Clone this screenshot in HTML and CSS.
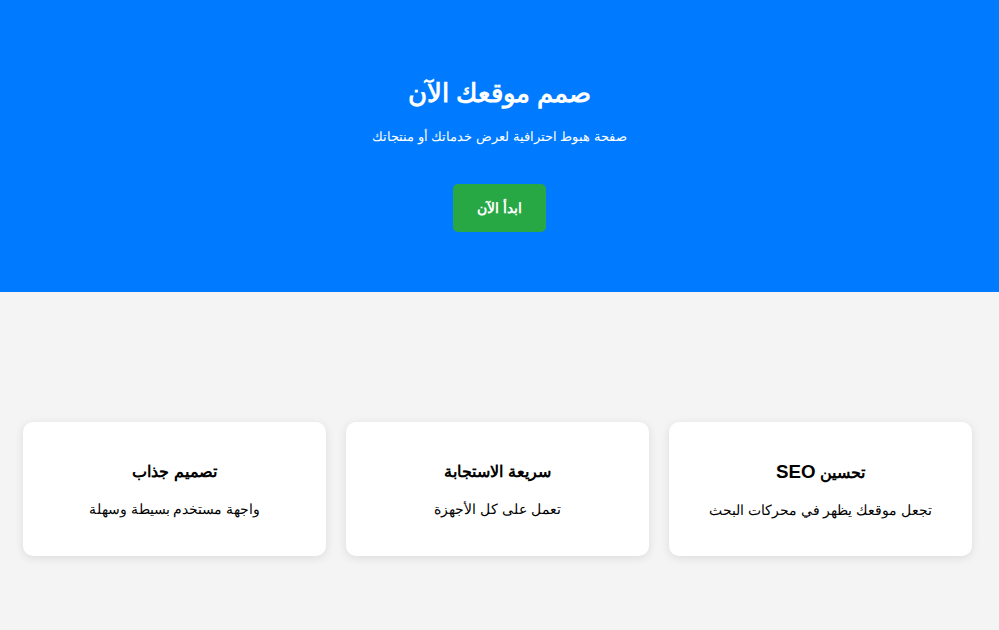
FILE: index.html
```html
<!DOCTYPE html>
<html lang="ar" dir="rtl">
<head>
<meta charset="utf-8">
<title>صمم موقعك الآن</title>
<link rel="stylesheet" href="styles.css">
</head>
<body>
<header class="hero">
  <h1 class="hero-title">صمم موقعك الآن</h1>
  <p class="hero-sub">صفحة هبوط احترافية لعرض خدماتك أو منتجاتك</p>
  <a class="hero-btn" href="#">ابدأ الآن</a>
</header>
<section class="features">
  <div class="card">
    <h3 class="card-title">تحسين <span class="latin">SEO</span></h3>
    <p class="card-text">تجعل موقعك يظهر في محركات البحث</p>
  </div>
  <div class="card">
    <h3 class="card-title">سريعة الاستجابة</h3>
    <p class="card-text">تعمل على كل الأجهزة</p>
  </div>
  <div class="card">
    <h3 class="card-title">تصميم جذاب</h3>
    <p class="card-text">واجهة مستخدم بسيطة وسهلة</p>
  </div>
</section>
</body>
</html>
```
FILE: styles.css
```css
html, body {
  margin: 0;
  padding: 0;
}
body {
  font-family: "Liberation Sans", Arial, sans-serif;
  background: #f4f4f4;
  color: #000;
}
.hero {
  background: #007bff;
  color: #fff;
  text-align: center;
  padding: 74px 20px 60px;
  display: flex;
  flex-direction: column;
  align-items: center;
}
.hero-title {
  font-size: 26px;
  line-height: 38px;
  font-weight: bold;
  margin: 0;
}
.hero-sub {
  font-size: 13px;
  line-height: 18px;
  margin: 16px 0 0;
}
.hero-btn {
  display: inline-block;
  margin-top: 38px;
  background: #28a745;
  color: #fff;
  text-decoration: none;
  font-weight: bold;
  font-size: 14px;
  line-height: 18px;
  padding: 15px 24px;
  border-radius: 5px;
}
.features {
  display: grid;
  grid-template-columns: repeat(3, 1fr);
  gap: 20px;
  padding: 130px 27px 80px 23px;
}
.card {
  background: #fff;
  border-radius: 10px;
  box-shadow: 0 2px 10px rgba(0, 0, 0, 0.1);
  padding: 20px;
  text-align: center;
}
.card-title {
  font-size: 16px;
  line-height: 22px;
  font-weight: bold;
  margin: 19px 0 18px;
}
.latin {
  font-size: 18.72px;
}
.card-text {
  font-size: 13.5px;
  line-height: 18px;
  margin: 0 0 16px;
}
```
